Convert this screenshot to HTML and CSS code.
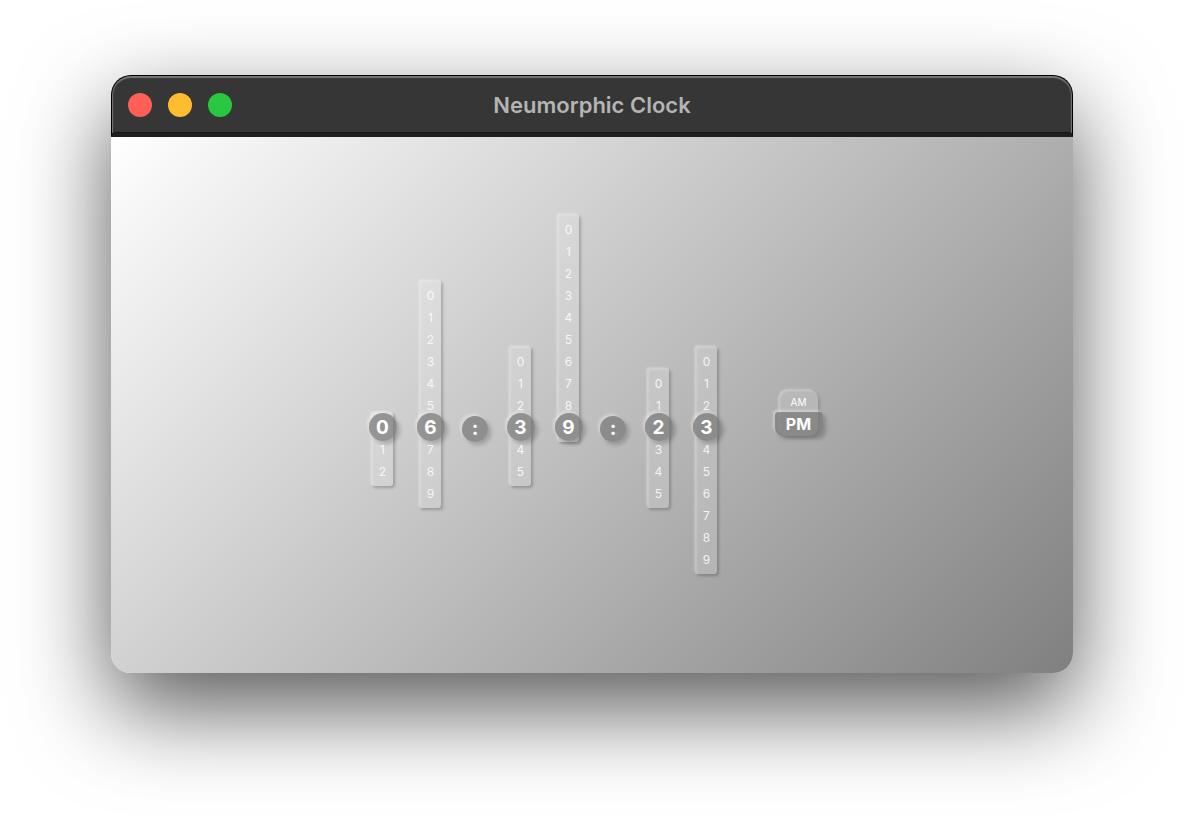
FILE: index.html
```
<!DOCTYPE html>
<html lang="en">
<head>
<meta charset="utf-8">
<meta name="viewport" content="width=device-width, initial-scale=1">
<title>Neumorphic Clock</title>
<link rel="stylesheet" href="styles.css">
</head>
<body>
<main class="window">
  <header class="titlebar">
    <div class="controls">
      <button class="control close" type="button" aria-label="Close"></button>
      <button class="control minimize" type="button" aria-label="Minimize"></button>
      <button class="control zoom" type="button" aria-label="Zoom"></button>
    </div>
    <h1 class="title">Neumorphic Clock</h1>
  </header>
  <section class="clock" aria-label="Clock">
    <div class="pair">
      <ul class="strip" style="--value: 0"><li><b class="active">0</b></li><li>1</li><li>2</li></ul>
      <ul class="strip" style="--value: 6"><li>0</li><li>1</li><li>2</li><li>3</li><li>4</li><li>5</li><li><b class="active">6</b></li><li>7</li><li>8</li><li>9</li></ul>
    </div>
    <div class="colon">:</div>
    <div class="pair">
      <ul class="strip" style="--value: 3"><li>0</li><li>1</li><li>2</li><li><b class="active">3</b></li><li>4</li><li>5</li></ul>
      <ul class="strip" style="--value: 9"><li>0</li><li>1</li><li>2</li><li>3</li><li>4</li><li>5</li><li>6</li><li>7</li><li>8</li><li><b class="active">9</b></li></ul>
    </div>
    <div class="colon">:</div>
    <div class="pair">
      <ul class="strip" style="--value: 2"><li>0</li><li>1</li><li><b class="active">2</b></li><li>3</li><li>4</li><li>5</li></ul>
      <ul class="strip" style="--value: 3"><li>0</li><li>1</li><li>2</li><li><b class="active">3</b></li><li>4</li><li>5</li><li>6</li><li>7</li><li>8</li><li>9</li></ul>
    </div>
    <div class="period">
      <span class="am">AM</span>
      <b class="pm">PM</b>
    </div>
  </section>
</main>
</body>
</html>
```
FILE: styles.css
```
* {
  box-sizing: border-box;
}

body {
  display: flex;
  min-height: 100vh;
  margin: 0;
  padding: 75px 111px 147px;
  overflow: hidden;
  background: #fff;
  font-family: Inter, "Liberation Sans", sans-serif;
}

.window {
  display: flex;
  flex: 1;
  flex-direction: column;
  border-radius: 20px;
  box-shadow: 0 35px 92px rgba(0, 0, 0, 0.66);
}

.titlebar {
  display: grid;
  grid-template-columns: 1fr auto 1fr;
  align-items: center;
  height: 62px;
  padding: 0 16px;
  border: 1px solid #000;
  border-bottom: 4px solid #1f1f1f;
  border-radius: 20px 20px 0 0;
  background: #363636;
  box-shadow: inset 0 2px 1px #777, inset 1px 0 1px #777, inset -1px 0 1px #777, inset 0 -1px #000;
}

.controls {
  display: flex;
  gap: 16px;
}

.control {
  width: 24px;
  height: 24px;
  padding: 0;
  border: 0;
  border-radius: 50%;
}

.close {
  background: #ff5f57;
}

.minimize {
  background: #febc2e;
}

.zoom {
  background: #28c840;
}

.title {
  margin: 0;
  color: #b4b4b4;
  font-size: 22px;
  font-weight: 600;
  line-height: 32px;
}

.clock {
  display: flex;
  flex: 1;
  align-items: flex-start;
  justify-content: center;
  gap: 21px;
  padding: 77px 0 0 5px;
  border-radius: 0 0 20px 20px;
  background: linear-gradient(135deg, #fff, #808080);
  color: #fff;
}

.pair {
  display: flex;
  align-items: flex-start;
  gap: 26px;
}

/* Each strip slides down so that its current digit sits on the reading line. */
.strip {
  width: 22px;
  margin: calc((9 - var(--value)) * 22px) 0 0;
  padding: 4px 0;
  border-radius: 3px;
  background: rgba(255, 255, 255, 0.15);
  box-shadow: 2px 2px 3px rgba(0, 0, 0, 0.22), -1px -1px 2px rgba(255, 255, 255, 0.25), inset 2px 2px 2px rgba(255, 255, 255, 0.2);
  list-style: none;
}

.strip li {
  display: flex;
  align-items: center;
  justify-content: center;
  height: 22px;
  padding-left: 1px;
  color: rgba(255, 255, 255, 0.85);
  font-size: 12px;
}

.active,
.colon,
.pm {
  display: flex;
  flex-shrink: 0;
  align-items: center;
  justify-content: center;
  background: rgba(116, 116, 116, 0.68);
  box-shadow: 3px 3px 4px rgba(0, 0, 0, 0.2), -2px -2px 3px rgba(255, 255, 255, 0.35);
  color: #fff;
}

.active {
  width: 28px;
  height: 28px;
  border-radius: 50%;
  font-size: 19px;
  font-weight: 700;
}

.colon {
  width: 26px;
  height: 26px;
  margin-top: 202px;
  padding-bottom: 3px;
  border-radius: 50%;
  font-size: 20px;
  font-weight: 700;
}

.period {
  display: flex;
  flex-direction: column;
  align-items: center;
  width: 39px;
  height: 46px;
  margin: 176px 0 0 41px;
  border-radius: 9px;
  background: rgba(255, 255, 255, 0.12);
  box-shadow: 2px 2px 3px rgba(0, 0, 0, 0.15), -1px -1px 2px rgba(255, 255, 255, 0.3), inset 1px 1px 2px rgba(255, 255, 255, 0.25);
}

.am {
  padding-top: 2px;
  font-size: 10px;
  line-height: 20px;
}

.pm {
  width: 48px;
  height: 24px;
  border-radius: 4px 4px 8px 8px;
  font-size: 16px;
  font-weight: 700;
}
```
